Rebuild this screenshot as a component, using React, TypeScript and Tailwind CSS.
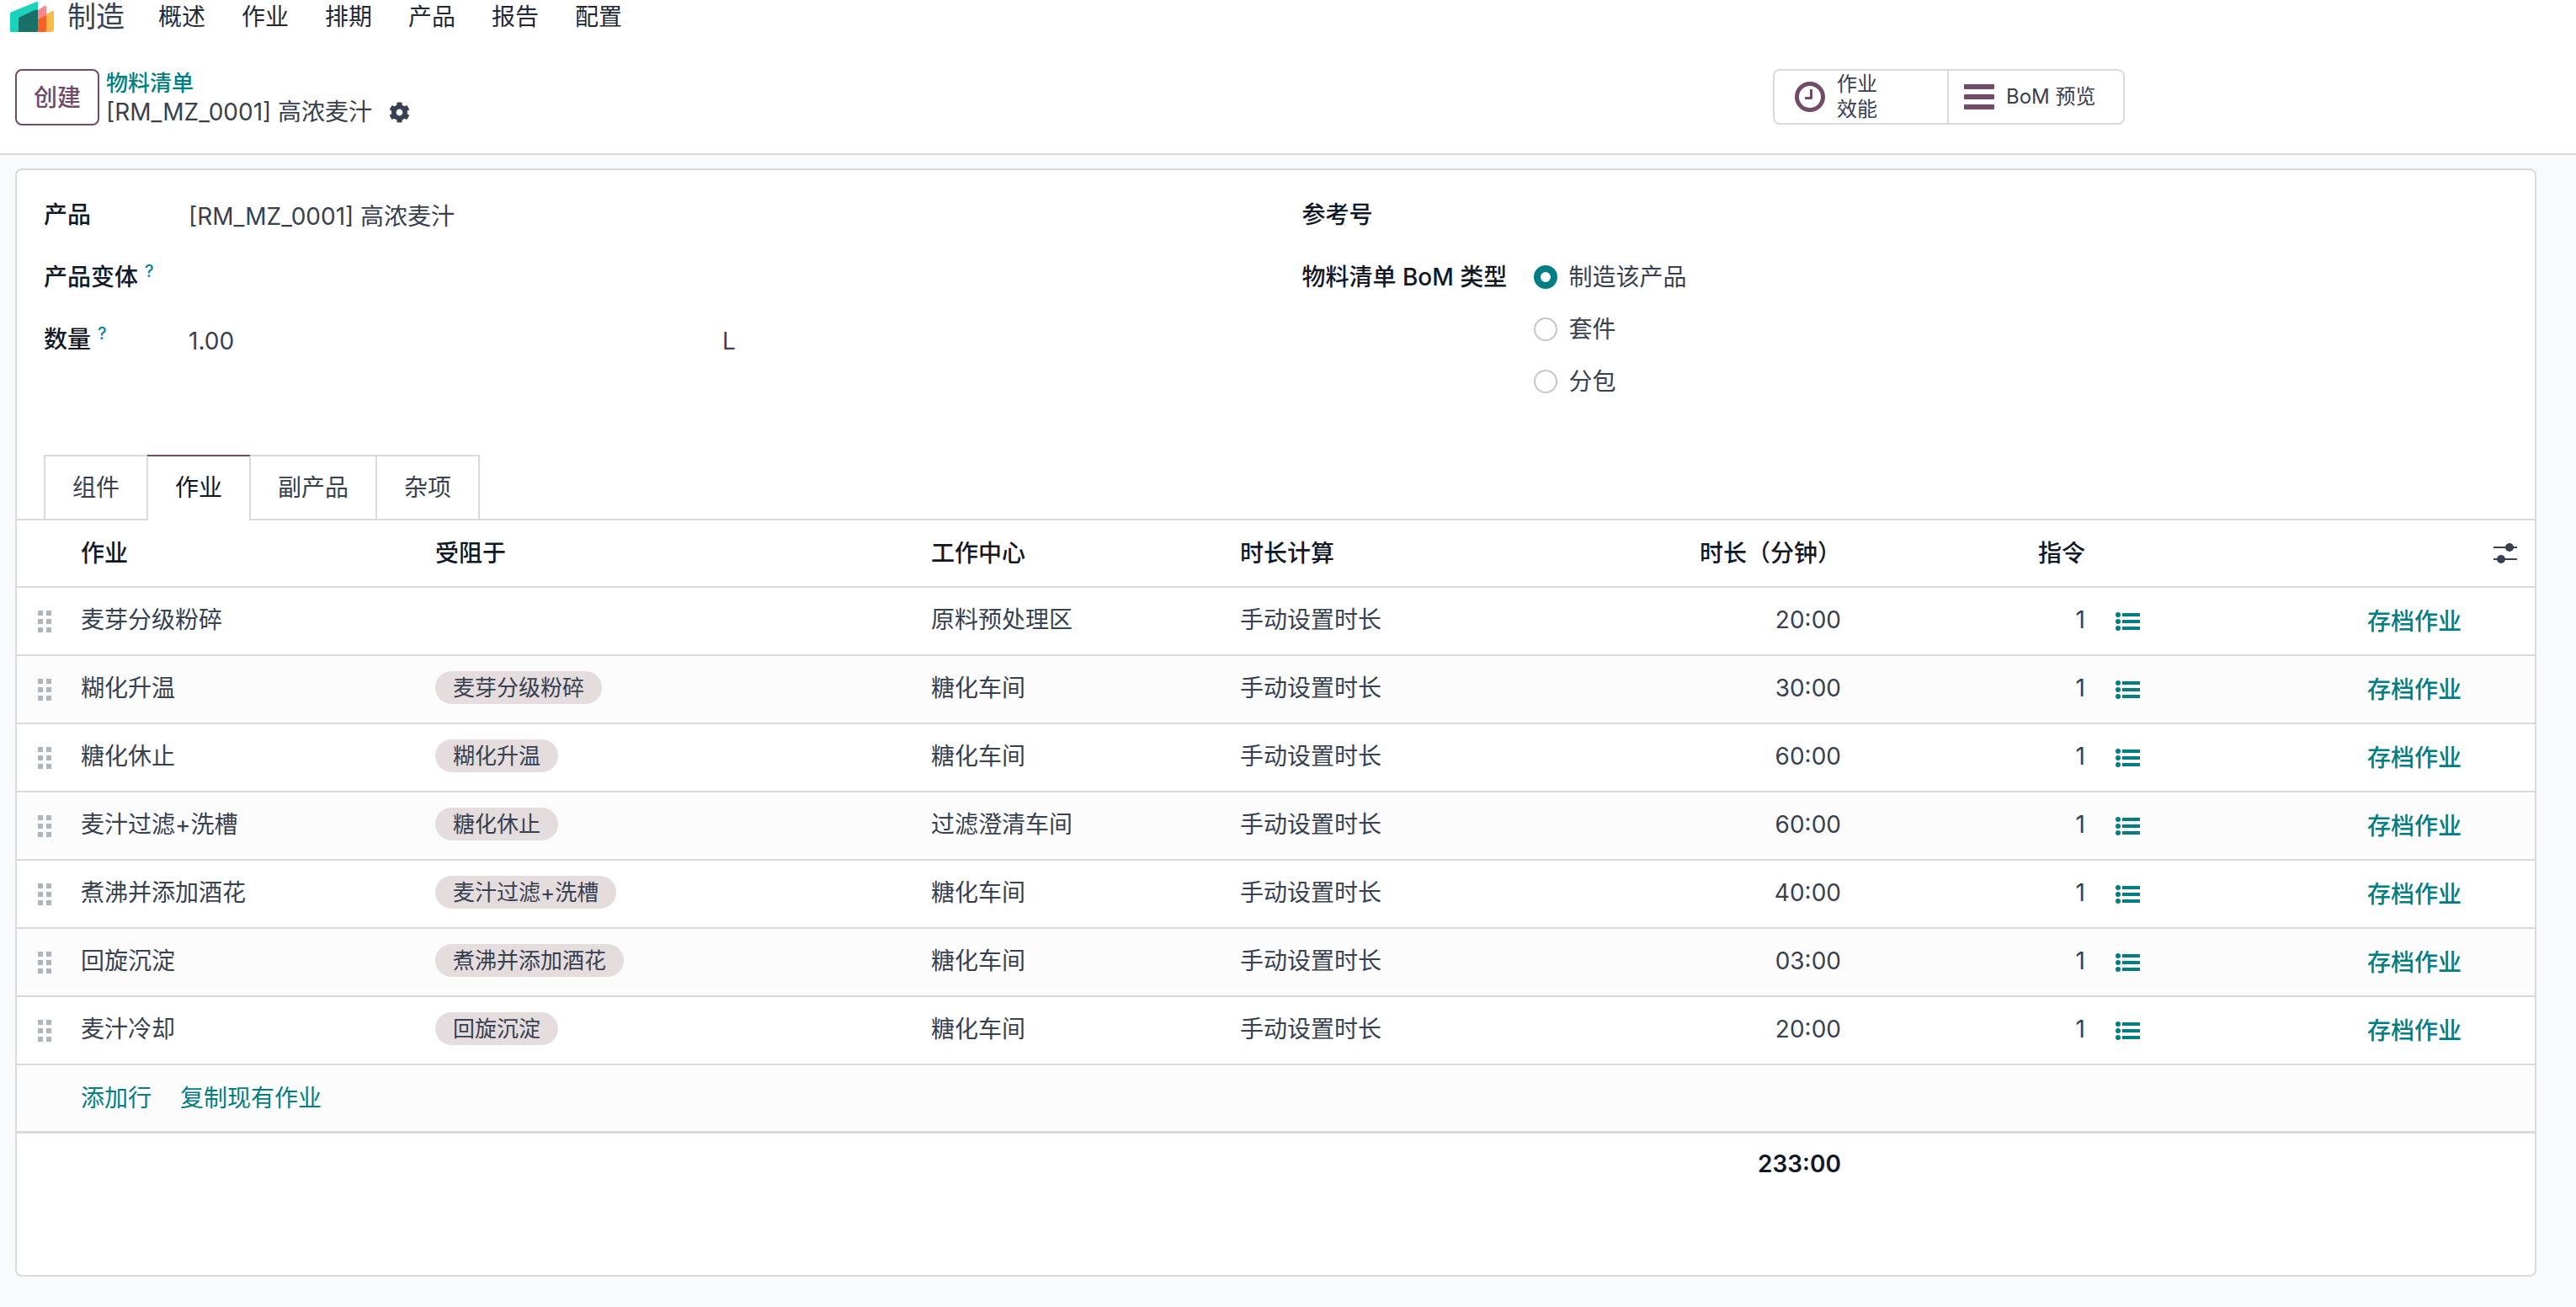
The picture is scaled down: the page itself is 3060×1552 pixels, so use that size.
import React, { useState } from "react";
import { FaCog } from "react-icons/fa";

interface Operation {
  name: string;
  blockedBy?: string;
  workcenter: string;
  duration: string;
}

const MENUS = ["概述", "作业", "排期", "产品", "报告", "配置"];
const TABS = ["组件", "作业", "副产品", "杂项"];
const BOM_TYPES = ["制造该产品", "套件", "分包"];

const OPERATIONS: Operation[] = [
  { name: "麦芽分级粉碎", workcenter: "原料预处理区", duration: "20:00" },
  { name: "糊化升温", blockedBy: "麦芽分级粉碎", workcenter: "糖化车间", duration: "30:00" },
  { name: "糖化休止", blockedBy: "糊化升温", workcenter: "糖化车间", duration: "60:00" },
  { name: "麦汁过滤+洗槽", blockedBy: "糖化休止", workcenter: "过滤澄清车间", duration: "60:00" },
  { name: "煮沸并添加酒花", blockedBy: "麦汁过滤+洗槽", workcenter: "糖化车间", duration: "40:00" },
  { name: "回旋沉淀", blockedBy: "煮沸并添加酒花", workcenter: "糖化车间", duration: "03:00" },
  { name: "麦汁冷却", blockedBy: "回旋沉淀", workcenter: "糖化车间", duration: "20:00" },
];

const Logo = () => (
  <svg width="52" height="36" viewBox="0 0 52 36" aria-hidden="true">
    <path d="M52 12v21a3 3 0 0 1-3 3H36V19l14-8q2-.5 2 1z" fill="#FBB945" />
    <path d="M43 6v27a3 3 0 0 1-3 3H28V13l13-8q2-.5 2 1z" fill="#FC868B" />
    <path d="M43 16v17a3 3 0 0 1-3 3h-9V22z" fill="#F86126" />
    <path d="M33 1v32a3 3 0 0 1-3 3H1a1 1 0 0 1-1-1V14q0-1 1-1.500L31.500 0Q33-.5 33 1z" fill="#1AD3BB" />
    <path d="M33 10v23a3 3 0 0 1-3 3H11a1 1 0 0 1-1-1V20q0-1 1-1.500L29 10q2-1 4 0z" fill="#1A6F66" />
  </svg>
);

const ClockIcon = () => (
  <svg width="36" height="36" viewBox="0 0 36 36" fill="none" stroke="#714B67" aria-hidden="true">
    <circle cx="18" cy="18" r="15.500" strokeWidth="5" />
    <path d="M19.500 9v10.500H12" strokeWidth="3" strokeLinejoin="round" />
  </svg>
);

const BarsIcon = () => (
  <svg width="36" height="30" viewBox="0 0 36 30" fill="#714B67" aria-hidden="true">
    <rect width="36" height="6" rx="1" />
    <rect y="12" width="36" height="6" rx="1" />
    <rect y="24" width="36" height="6" rx="1" />
  </svg>
);

const ListIcon = () => (
  <svg width="29" height="22" viewBox="0 0 29 22" fill="currentColor" aria-hidden="true">
    <circle cx="3" cy="3" r="3" />
    <circle cx="3" cy="11" r="3" />
    <circle cx="3" cy="19" r="3" />
    <path d="M8 1h21v4H8zM8 9h21v4H8zM8 17h21v4H8z" />
  </svg>
);

const SlidersIcon = () => (
  <svg width="28" height="26" viewBox="0 0 28 26" fill="#374151" aria-hidden="true">
    <path d="M0 5h28v2H0zM0 19h28v2H0z" />
    <circle cx="19" cy="6" r="5" />
    <circle cx="9" cy="20" r="5" />
  </svg>
);

const DragHandle = () => (
  <svg width="17" height="26" viewBox="0 0 17 26" fill="#ADB5BD" aria-hidden="true">
    <path d="M0 0h6v6H0zM10 0h6v6h-6zM0 10h6v6H0zM10 10h6v6h-6zM0 20h6v6H0zM10 20h6v6h-6z" />
  </svg>
);

const Help = () => (
  <sup className="ml-2 text-[20px] font-medium text-[#0180A5]">?</sup>
);

const App: React.FC = () => {
  const [activeTab, setActiveTab] = useState("作业");
  const [bomType, setBomType] = useState(BOM_TYPES[0]);

  return (
    <div className="min-h-screen bg-[#F9FAFB] pb-8 font-['Inter','Noto_Sans_CJK_SC',sans-serif] text-[28px] leading-[42px] text-[#374151]">
      <header className="border-b-2 border-[#D8DADD] bg-white">
        <nav className="flex h-10 items-center pl-3">
          <Logo />
          <a href="#" className="ml-4 text-[34px] leading-10">
            制造
          </a>
          <div className="ml-10 flex gap-[43px] text-[#1F2937]">
            {MENUS.map((menu) => (
              <button key={menu} type="button">
                {menu}
              </button>
            ))}
          </div>
        </nav>

        <div className="flex h-[142px] items-start pt-[42px] pl-[18px]">
          <div className="flex flex-1 items-start">
            <button
              type="button"
              className="h-[67px] rounded-lg border-2 border-[#714B67] px-5 font-medium text-[#714B67]">
              创建
            </button>
            <div className="ml-2 flex flex-col">
              <a href="#" className="text-[26px] leading-[34px] font-medium text-[#017E84]">
                物料清单
              </a>
              <div className="flex items-center gap-5 leading-[34px]">
                <span>[RM_MZ_0001] 高浓麦汁</span>
                <button type="button" aria-label="操作">
                  <FaCog size={25} />
                </button>
              </div>
            </div>
          </div>
          <div className="mr-[536px] flex h-[66px] w-[418px] rounded-lg border-2 border-[#D8DADD] text-[24px] leading-[30px]">
            <button type="button" className="flex w-1/2 items-center gap-[14px] border-r-2 border-[#D8DADD] pl-6 text-left">
              <ClockIcon />
              <span className="w-12">作业效能</span>
            </button>
            <button type="button" className="flex w-1/2 items-center gap-[14px] pl-[18px] text-left">
              <BarsIcon />
              <span>BoM 预览</span>
            </button>
          </div>
        </div>
      </header>

      <main className="mt-4 mr-[47px] ml-[18px] rounded-lg border-2 border-[#D8DADD] bg-white pb-24">
        <section className="grid grid-cols-2 px-8 pt-8 pb-[66px]">
          <dl className="grid grid-cols-[172px_1fr] content-start gap-y-8 [&>dd]:pt-0.5 [&>dt]:h-[42px]">
            <dt className="font-medium text-[#111827]">产品</dt>
            <dd className="-mb-0.5">[RM_MZ_0001] 高浓麦汁</dd>
            <dt className="font-medium whitespace-nowrap text-[#111827]">
              产品变体
              <Help />
            </dt>
            <dd />
            <dt className="font-medium text-[#111827]">
              数量
              <Help />
            </dt>
            <dd className="flex">
              <span className="w-[634px]">1.00</span>
              <span>L</span>
            </dd>
          </dl>

          <div className="grid grid-cols-[275px_1fr] content-start gap-y-8 pl-[31px]">
            <span className="font-medium text-[#111827]">参考号</span>
            <span />
            <span id="bom-type" className="font-medium text-[#111827]">
              物料清单 BoM 类型
            </span>
            <div role="radiogroup" aria-labelledby="bom-type" className="flex flex-col gap-5">
              {BOM_TYPES.map((type) => (
                <label key={type} className="flex items-center gap-[14px]">
                  <input
                    type="radio"
                    name="bom_type"
                    checked={bomType === type}
                    onChange={() => setBomType(type)}
                    className="size-7 appearance-none rounded-full border-2 border-[#C5C7CA] bg-white checked:border-8 checked:border-[#017E84]"
                  />
                  {type}
                </label>
              ))}
            </div>
          </div>
        </section>

        <div role="tablist" className="flex border-b-2 border-[#D8DADD] pl-8">
          {TABS.map((tab) => (
            <button
              key={tab}
              type="button"
              role="tab"
              aria-selected={activeTab === tab}
              onClick={() => setActiveTab(tab)}
              className={`-mr-0.5 border-x-2 border-t-2 border-[#D8DADD] px-8 ${
                activeTab === tab
                  ? "z-10 -mb-0.5 h-[78px] border-t-[#714B67] bg-white pb-0.5 text-[#111827]"
                  : "h-[76px]"
              }`}>
              {tab}
            </button>
          ))}
        </div>

        <table className="w-full table-fixed border-collapse">
          <colgroup>
            <col className="w-[76px]" />
            <col className="w-[421px]" />
            <col className="w-[589px]" />
            <col className="w-[367px]" />
            <col className="w-[365px]" />
            <col className="w-[349px]" />
            <col className="w-[290px]" />
            <col />
            <col className="w-[199px]" />
          </colgroup>
          <thead>
            <tr className="h-[79px] border-b-2 border-[#D8DADD] text-left text-[#111827] [&>th]:font-medium">
              <th />
              <th>作业</th>
              <th>受阻于</th>
              <th>工作中心</th>
              <th>时长计算</th>
              <th className="text-right">时长（分钟）</th>
              <th className="text-right">指令</th>
              <th />
              <th className="pr-[21px]">
                <button type="button" aria-label="可选列" className="ml-auto block">
                  <SlidersIcon />
                </button>
              </th>
            </tr>
          </thead>
          <tbody>
            {OPERATIONS.map((op) => (
              <tr key={op.name} className="h-[81px] border-b-2 border-[#D8DADD] even:bg-[#FCFCFC]">
                <td className="pl-[25px]">
                  <DragHandle />
                </td>
                <td className="pb-1">{op.name}</td>
                <td className="pb-1">
                  {op.blockedBy && (
                    <span className="flex h-[39px] w-fit items-center rounded-full bg-[#E5DCDE] px-[21px] text-[26px] text-[#374151]">
                      {op.blockedBy}
                    </span>
                  )}
                </td>
                <td className="pb-1">{op.workcenter}</td>
                <td className="pb-1">手动设置时长</td>
                <td className="pb-1 text-right">{op.duration}</td>
                <td className="pb-1 text-right">1</td>
                <td className="pl-9">
                  <button type="button" aria-label="显示指令" className="block text-[#017E84]">
                    <ListIcon />
                  </button>
                </td>
                <td>
                  <button type="button" className="font-medium text-[#017E84]">
                    存档作业
                  </button>
                </td>
              </tr>
            ))}
            <tr className="h-20 border-b-3 border-[#D8DADD] bg-[#FCFCFC] text-[#017E84]">
              <td />
              <td colSpan={8}>
                <a href="#">添加行</a>
                <a href="#" className="ml-[34px]">
                  复制现有作业
                </a>
              </td>
            </tr>
          </tbody>
          <tfoot>
            <tr className="h-[74px] font-semibold text-[#111827]">
              <td colSpan={5} />
              <td className="text-right">233:00</td>
              <td colSpan={3} />
            </tr>
          </tfoot>
        </table>
      </main>
    </div>
  );
};

export default App;
